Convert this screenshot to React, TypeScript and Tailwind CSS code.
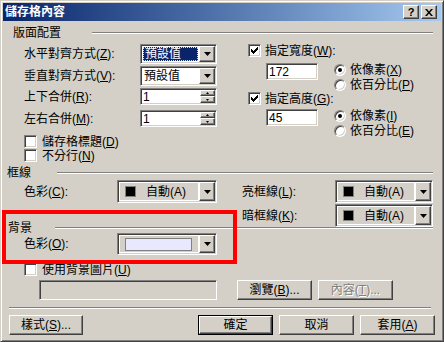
import type { ReactNode } from "react";

const sunken =
  "border border-t-[#808080] border-l-[#808080] border-r-white border-b-white p-[1px] shadow-[inset_1px_1px_0_#404040,inset_-1px_-1px_0_#d4d0c8]";
const raised =
  "border border-t-white border-l-white border-r-[#404040] border-b-[#404040] bg-[#d4d0c8] shadow-[inset_-1px_-1px_0_#808080]";

const U = ({ children }: { children: ReactNode }) => (
  <span className="underline underline-offset-[1px]">{children}</span>
);

const DropButton = () => (
  <div className={`${raised} flex w-[16px] shrink-0 items-center justify-center`}>
    <svg width="7" height="4" viewBox="0 0 7 4">
      <path d="M0 0h7L3.5 4z" fill="#000" />
    </svg>
  </div>
);

const Combo = ({ text, focused }: { text: string; focused?: boolean }) => (
  <div className={`${sunken} flex h-[20px] w-[77px] bg-white`}>
    <div className="flex flex-1 items-center">
      {focused ? (
        <span className="mx-[1px] flex h-[14px] flex-1 items-center border border-dotted border-[#e8e8a0] bg-[#0a246a] pl-[1px] text-white">
          {text}
        </span>
      ) : (
        <span className="pl-[2px]">{text}</span>
      )}
    </div>
    <DropButton />
  </div>
);

const SpinArrow = ({ up }: { up?: boolean }) => (
  <svg width="3" height="2" viewBox="0 0 3 2">
    <path d={up ? "M1.5 0L3 2H0z" : "M0 0h3L1.5 2z"} fill="#000" />
  </svg>
);

const Spin = ({ value }: { value: string }) => (
  <div className={`${sunken} flex h-[17px] w-[77px] bg-white`}>
    <div className="flex flex-1 items-center pl-[1px]">{value}</div>
    <div className="flex w-[15px] flex-col">
      <div className={`${raised} flex h-[6px] items-center justify-center`}>
        <SpinArrow up />
      </div>
      <div className={`${raised} flex h-[7px] items-center justify-center`}>
        <SpinArrow />
      </div>
    </div>
  </div>
);

const Check = ({ checked }: { checked?: boolean }) => (
  <div className={`${sunken} flex h-[13px] w-[13px] shrink-0 items-center justify-center bg-white`}>
    {checked && (
      <svg width="7" height="7" viewBox="0 0 7 7">
        {[2, 3, 4, 3, 2, 1, 0].map((y, x) => (
          <rect key={x} x={x} y={y} width="1" height="3" fill="#000" />
        ))}
      </svg>
    )}
  </div>
);

const Radio = ({ on }: { on?: boolean }) => (
  <div className="flex h-[12px] w-[12px] shrink-0 items-center justify-center rounded-full border border-t-[#808080] border-l-[#808080] border-r-white border-b-white bg-white shadow-[inset_1px_1px_0_#404040,inset_-1px_-1px_0_#d4d0c8]">
    {on && <div className="h-[4px] w-[4px] rounded-full bg-black" />}
  </div>
);

const Line = ({ className }: { className: string }) => (
  <div className={`h-[2px] border-t border-b border-t-[#808080] border-b-white ${className}`} />
);

const ColorCombo = ({ width, children }: { width: string; children: ReactNode }) => (
  <div className={`${sunken} flex h-full ${width}`}>
    <div className="flex flex-1 items-center border border-white bg-[#d4d0c8]">{children}</div>
    <DropButton />
  </div>
);

const AutoColor = () => (
  <>
    <div className="ml-[5px] h-[11px] w-[11px] border border-[#808080] bg-black" />
    <span className="ml-[10px]">
      自動(A)
    </span>
  </>
);

const Button = ({
  children,
  width,
  disabled,
}: {
  children: ReactNode;
  width: string;
  disabled?: boolean;
}) => (
  <div
    className={`${raised} flex h-full items-center justify-center ${width} ${
      disabled ? "text-[#808080] [text-shadow:1px_1px_0_#fff]" : ""
    }`}
  >
    {children}
  </div>
);

export default function App() {
  return (
    <div className="relative h-[342px] w-[444px] overflow-hidden border border-t-[#d4d0c8] border-l-[#d4d0c8] border-r-[#404040] border-b-[#404040] bg-[#d4d0c8] p-[2px] font-['Liberation_Sans','Noto_Sans_CJK_TC',sans-serif] text-[12px] leading-[14px] text-black shadow-[inset_1px_1px_0_#fff,inset_-1px_-1px_0_#808080]">
      {/* title bar */}
      <div className="flex h-[18px] items-center bg-linear-to-r from-[#0a246a] to-[#a6caf0] pl-[2px] pr-[4px]">
        <span className="flex-1 font-bold text-white">儲存格內容</span>
        <div className={`${raised} flex h-[14px] w-[16px] items-center justify-center text-[11px] font-bold`}>
          ?
        </div>
        <div className={`${raised} ml-[2px] flex h-[14px] w-[16px] items-center justify-center`}>
          <svg width="8" height="7" viewBox="0 0 8 7">
            <path d="M0 0h2l2 2.5L6 0h2L5 3.5 8 7H6L4 4.5 2 7H0l3-3.5z" fill="#000" />
          </svg>
        </div>
      </div>

      <div className="flex flex-col">
        <div className="mt-[5px] flex h-[14px] items-center pl-[10px] pr-[8px]">
          <span>版面配置</span>
          <Line className="ml-[31px] flex-1" />
        </div>

        <div className="flex">
          <div className="ml-[21px] flex w-[193px] flex-col">
            <div className="mt-[4px] flex h-[20px] items-center">
              <span className="w-[116px]">
                水平對齊方式(<U>Z</U>):
              </span>
              <Combo text="預設值" focused />
            </div>
            <div className="mt-[2px] flex h-[20px] items-center">
              <span className="w-[116px]">
                垂直對齊方式(<U>V</U>):
              </span>
              <Combo text="預設值" />
            </div>
            <div className="mt-[2px] flex h-[17px] items-center">
              <span className="w-[116px]">
                上下合併(<U>R</U>):
              </span>
              <Spin value="1" />
            </div>
            <div className="mt-[5px] flex h-[17px] items-center">
              <span className="w-[116px]">
                左右合併(<U>M</U>):
              </span>
              <Spin value="1" />
            </div>
            <div className="mt-[8px] flex h-[13px] items-center gap-[5px]">
              <Check />
              <span>
                儲存格標題(<U>D</U>)
              </span>
            </div>
            <div className="mt-[1px] flex h-[13px] items-center gap-[5px]">
              <Check />
              <span>
                不分行(<U>N</U>)
              </span>
            </div>
          </div>

          <div className="ml-[31px] flex w-[185px] flex-col">
            <div className="mt-[4px] flex h-[13px] items-center gap-[4px]">
              <Check checked />
              <span>
                指定寬度(<U>W</U>):
              </span>
            </div>
            <div className="mt-[6px] flex">
              <div className={`${sunken} ml-[18px] flex h-[17px] w-[52px] items-center bg-white pl-[2px]`}>172</div>
              <div className="ml-[16px] flex flex-col">
                <div className="flex h-[13px] items-center gap-[4px]">
                  <Radio on />
                  <span>
                    依像素(<U>X</U>)
                  </span>
                </div>
                <div className="mt-[2px] flex h-[13px] items-center gap-[4px]">
                  <Radio />
                  <span>
                    依百分比(<U>P</U>)
                  </span>
                </div>
              </div>
            </div>
            <div className="mt-[1px] flex h-[13px] items-center gap-[4px]">
              <Check checked />
              <span>
                指定高度(<U>G</U>):
              </span>
            </div>
            <div className="mt-[4px] flex">
              <div className={`${sunken} ml-[18px] flex h-[17px] w-[52px] items-center bg-white pl-[2px]`}>45</div>
              <div className="ml-[16px] flex flex-col">
                <div className="flex h-[13px] items-center gap-[4px]">
                  <Radio on />
                  <span>
                    依像素(<U>I</U>)
                  </span>
                </div>
                <div className="mt-[2px] flex h-[13px] items-center gap-[4px]">
                  <Radio />
                  <span>
                    依百分比(<U>E</U>)
                  </span>
                </div>
              </div>
            </div>
          </div>
        </div>

        <div className="mt-[4px] flex h-[14px] items-center pl-[4px] pr-[8px]">
          <span>框線</span>
          <Line className="ml-[26px] flex-1" />
        </div>

        <div className="flex h-[23px] items-center pl-[21px]">
          <span className="w-[93px]">
            色彩(<U>C</U>):
          </span>
          <ColorCombo width="w-[100px]">
            <AutoColor />
          </ColorCombo>
          <span className="ml-[25px] w-[93px]">
            亮框線(<U>L</U>):
          </span>
          <ColorCombo width="w-[98px]">
            <AutoColor />
          </ColorCombo>
        </div>
        <div className="mt-[1px] flex h-[23px] items-center pl-[239px]">
          <span className="w-[93px]">
            暗框線(<U>K</U>):
          </span>
          <ColorCombo width="w-[98px]">
            <AutoColor />
          </ColorCombo>
        </div>

        <div className="mt-[-6px] flex h-[14px] items-center pl-[5px] pr-[8px]">
          <span>背景</span>
          <Line className="ml-[23px] flex-1" />
        </div>

        <div className="mt-[-2px] flex h-[22px] items-center pl-[21px]">
          <span className="w-[93px]">
            色彩(<U>O</U>):
          </span>
          <ColorCombo width="w-[100px]">
            <div className="ml-[5px] h-[13px] w-[67px] border border-[#808080] bg-[#e8e8fe]" />
          </ColorCombo>
        </div>

        <div className="mt-[8px] flex h-[13px] items-center gap-[5px] pl-[21px]">
          <Check />
          <span>
            使用背景圖片(<U>U</U>)
          </span>
        </div>

        <div className="mt-[4px] flex h-[20px]">
          <div className={`${sunken} ml-[36px] h-full w-[178px] bg-[#d4d0c8]`} />
          <div className="ml-[20px] h-full">
            <Button width="w-[75px]">
              瀏覽(<U>B</U>)...
            </Button>
          </div>
          <div className="ml-[6px] h-full">
            <Button width="w-[75px]" disabled>
              內容(<U>T</U>)...
            </Button>
          </div>
        </div>

        <Line className="ml-[6px] mt-[7px] w-[422px]" />

        <div className="mt-[6px] flex h-[20px]">
          <div className="ml-[6px] h-full">
            <Button width="w-[74px]">
              樣式(<U>S</U>)...
            </Button>
          </div>
          <div className="ml-[115px] h-full w-[75px] border border-black">
            <Button width="w-full">確定</Button>
          </div>
          <div className="ml-[6px] h-full">
            <Button width="w-[75px]">取消</Button>
          </div>
          <div className="ml-[6px] h-full">
            <Button width="w-[75px]">
              套用(<U>A</U>)
            </Button>
          </div>
        </div>
      </div>

      {/* red highlight annotation */}
      <div className="absolute left-[1px] top-[209px] h-[54px] w-[235px] border-4 border-[#ff0000]" />
    </div>
  );
}
